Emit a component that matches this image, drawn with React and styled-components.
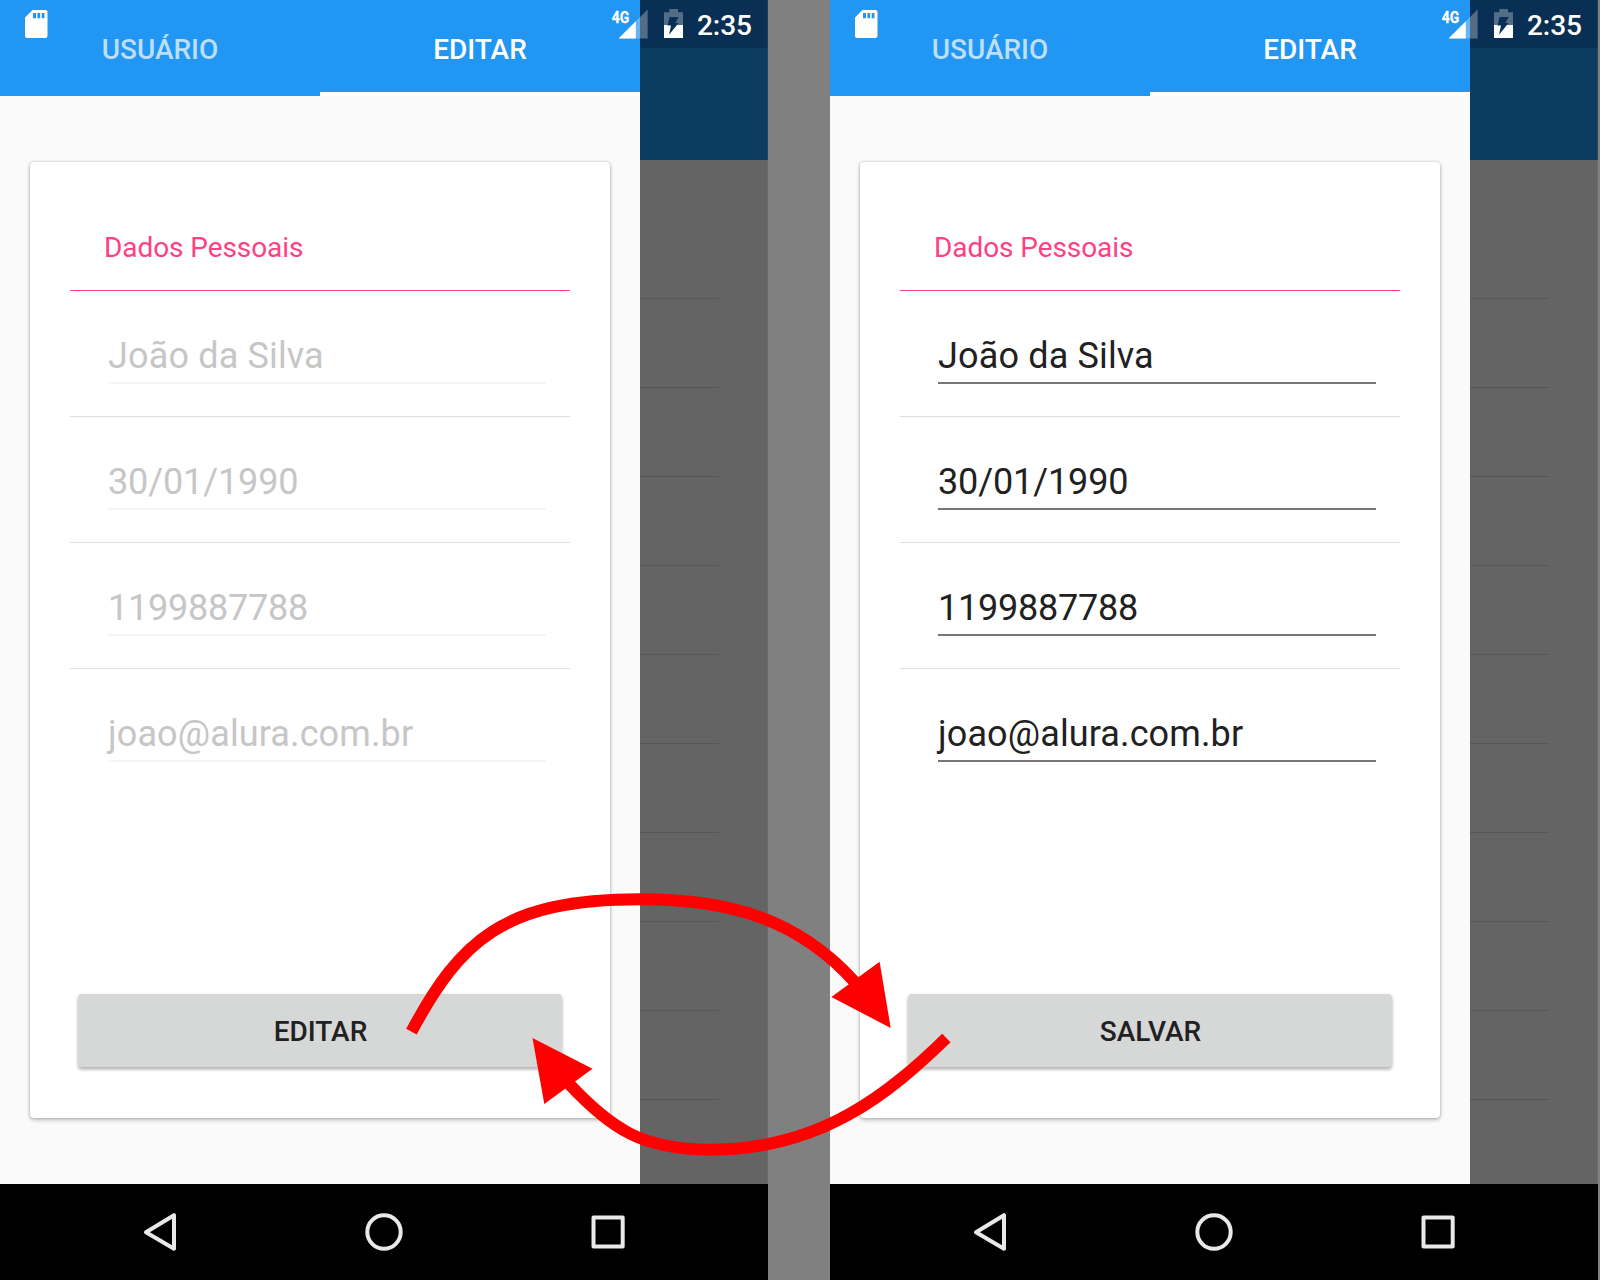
import React from "react";
import styled, { createGlobalStyle } from "styled-components";

const GlobalStyle = createGlobalStyle`
  * { box-sizing: border-box; }
  body {
    margin: 0;
    background: #808080;
    font-family: Roboto, "Noto Sans", sans-serif;
  }
`;

const Stage = styled.main`
  position: relative;
  display: flex;
  gap: 62px;
  width: 1600px;
  height: 1280px;
  overflow: hidden;
  background: #808080;
`;

const Phone = styled.section`
  position: relative;
  display: flex;
  flex-direction: column;
  flex: none;
  width: 768px;
  height: 1280px;
`;

const Screen = styled.div`
  display: flex;
  height: 1184px;
`;

const StatusIcons = styled.div`
  position: absolute;
  inset: 0 0 auto 0;
  height: 48px;
  display: flex;
  justify-content: space-between;
  color: #fff;
`;

const StatusRight = styled.div`
  display: flex;
  padding-right: 16px;
`;

const Clock = styled.time`
  margin-left: 9px;
  font-size: 28px;
  font-weight: 500;
  line-height: 51px;
`;

const Drawer = styled.div`
  width: 640px;
  display: flex;
  flex-direction: column;
  background: #fafafa;
`;

const Tabs = styled.nav`
  display: flex;
  height: 96px;
  background: #2196f3;
`;

const Tab = styled.div`
  flex: 1;
  padding-top: 4px;
  border-bottom: 4px solid ${(p) => (p.$active ? "#fff" : "transparent")};
  color: ${(p) => (p.$active ? "#fff" : "#bcdffb")};
  font-size: 28px;
  font-weight: 500;
  line-height: 92px;
  text-align: center;
`;

const Card = styled.div`
  display: flex;
  flex-direction: column;
  margin: 66px 30px;
  height: 956px;
  padding: 0 40px;
  border-radius: 4px;
  background: #fff;
  box-shadow: 0 2px 4px rgba(0, 0, 0, 0.24), 0 0 3px rgba(0, 0, 0, 0.2);
`;

const Heading = styled.h2`
  margin: 0;
  height: 129px;
  padding: 69px 34px 0;
  border-bottom: 1px solid #ff4081;
  color: #ff4081;
  font-size: 28px;
  font-weight: 400;
  letter-spacing: -0.08px;
  line-height: 33px;
`;

const Row = styled.div`
  height: 126px;
  padding: 33px 24px 0 38px;
  border-bottom: 1px solid #dedede;
  &:last-of-type { border-bottom-color: transparent; }
`;

const Field = styled.div`
  height: 60px;
  padding-top: 11px;
  border-bottom: 2px solid ${(p) => (p.$enabled ? "#757575" : "#f5f5f5")};
  color: ${(p) => (p.$enabled ? "#212121" : "#c6c6c6")};
  font-size: 36px;
  letter-spacing: ${(p) => p.$tracking}px;
  line-height: 42px;
`;

const Action = styled.button`
  margin: auto 8px 51px;
  height: 73px;
  padding: 1px 0 0 1px;
  border: 0;
  border-radius: 4px;
  background: #d6d7d7;
  box-shadow: 0 3px 3px rgba(0, 0, 0, 0.2), 0 1px 4px rgba(0, 0, 0, 0.14);
  color: #212121;
  font: 500 28px Roboto, sans-serif;
`;

const Backdrop = styled.div`
  flex: 1;
  background: #646464;
  box-shadow: inset -1px 0 #6a6a6a;
`;

const DimStatus = styled.div`
  height: 48px;
  background: #0a2f54;
  box-shadow: inset -1px 0 #1f3c58;
`;

const DimToolbar = styled.div`
  height: 112px;
  background: #0c3c60;
  box-shadow: inset -1px 0 #214864;
`;

const DimList = styled.div`
  padding: 50px 49px 0 0;
`;

const DimItem = styled.div`
  height: 89px;
  border-bottom: 1px solid #575757;
`;

const NavBar = styled.div`
  display: flex;
  justify-content: center;
  align-items: center;
  gap: 176px;
  height: 96px;
  background: #000;
  svg {
    fill: none;
    stroke: #e9e9e9;
    stroke-width: 4;
    stroke-linejoin: round;
  }
`;

const Arrows = styled.svg`
  position: absolute;
  left: 400px;
  top: 860px;
  width: 560px;
  height: 420px;
  fill: none;
  stroke: #f00;
  stroke-width: 12;
  polygon { fill: #f00; stroke: none; }
`;

const SdCard = () => (
  <svg width="60" height="48" viewBox="0 0 60 48" fill="#fff">
    <path
      fillRule="evenodd"
      d="M32.5 10H45.5a2 2 0 0 1 2 2V36a2 2 0 0 1-2 2H27a2 2 0 0 1-2-2V17.5ZM33 13V18.3H36V13ZM37.4 13V18.3H40.2V13ZM41.7 13V18.3H44.5V13Z"
    />
  </svg>
);

const Signal = () => (
  <svg width="44" height="48" viewBox="608 0 44 48" fill="#fff">
    <path d="M647.6 9.5V38.4H618.6Z" opacity=".3" />
    <path d="M635.8 21.3V38.4H618.6Z" />
    <text
      x="611.8"
      y="22.8"
      fontFamily="Roboto"
      fontSize="17"
      fontWeight="700"
      textLength="17.5"
      lengthAdjust="spacingAndGlyphs"
      stroke="#fff"
      strokeWidth=".3"
    >
      4G
    </text>
  </svg>
);

const Battery = () => (
  <svg width="36" height="48" viewBox="652 0 36 48">
    <path d="M669.3 9H678V12.3H683V25H664V12.3H669.3Z" fill="#536d87" />
    <path d="M664 25H683V38H664Z" fill="#fff" />
    <path d="M669.6 17H678.6L675.4 23H678.6L669 34.8L671 25.4H667.6Z" fill="#0a2f54" />
  </svg>
);

const fields = [
  { value: "João da Silva", tracking: 0.15 },
  { value: "30/01/1990", tracking: -0.12 },
  { value: "1199887788", tracking: -0.22 },
  { value: "joao@alura.com.br", tracking: 0.12 },
];

function PhoneScreen({ editing, action }) {
  return (
    <Phone>
      <Screen>
        <Drawer>
          <Tabs>
            <Tab>USUÁRIO</Tab>
            <Tab $active>EDITAR</Tab>
          </Tabs>
          <Card>
            <Heading>Dados Pessoais</Heading>
            {fields.map(({ value, tracking }) => (
              <Row key={value}>
                <Field $enabled={editing} $tracking={tracking}>
                  {value}
                </Field>
              </Row>
            ))}
            <Action>{action}</Action>
          </Card>
        </Drawer>
        <Backdrop>
          <DimStatus />
          <DimToolbar />
          <DimList>
            {Array.from({ length: 10 }, (_, i) => (
              <DimItem key={i} />
            ))}
          </DimList>
        </Backdrop>
      </Screen>
      <NavBar>
        <svg width="48" height="48" viewBox="0 0 48 48">
          <path d="M38 7.2V40.8L10 24.2Z" />
        </svg>
        <svg width="48" height="48" viewBox="0 0 48 48">
          <circle cx="24" cy="24" r="16.7" />
        </svg>
        <svg width="48" height="48" viewBox="0 0 48 48">
          <rect x="9.5" y="9.4" width="29.2" height="29.2" />
        </svg>
      </NavBar>
      <StatusIcons>
        <SdCard />
        <StatusRight>
          <Signal />
          <Battery />
          <Clock>2:35</Clock>
        </StatusRight>
      </StatusIcons>
    </Phone>
  );
}

export default function App() {
  return (
    <>
      <GlobalStyle />
      <Stage>
        <PhoneScreen action="EDITAR" />
        <PhoneScreen editing action="SALVAR" />
        <Arrows viewBox="0 0 560 420">
          <path d="M11.4 171.7C60 81 103 39.3 240 39.3C330 39.3 398.2 59 455.4 122.7" />
          <polygon points="490.7,168 479.6,101.7 431.4,137" />
          <path d="M546.4 178C489.3 233.3 421.4 289.7 310.7 289.7C242.9 289.7 211.4 269.5 167.9 222.7" />
          <polygon points="132.5,178 192.5,208.7 144.3,244" />
        </Arrows>
      </Stage>
    </>
  );
}
